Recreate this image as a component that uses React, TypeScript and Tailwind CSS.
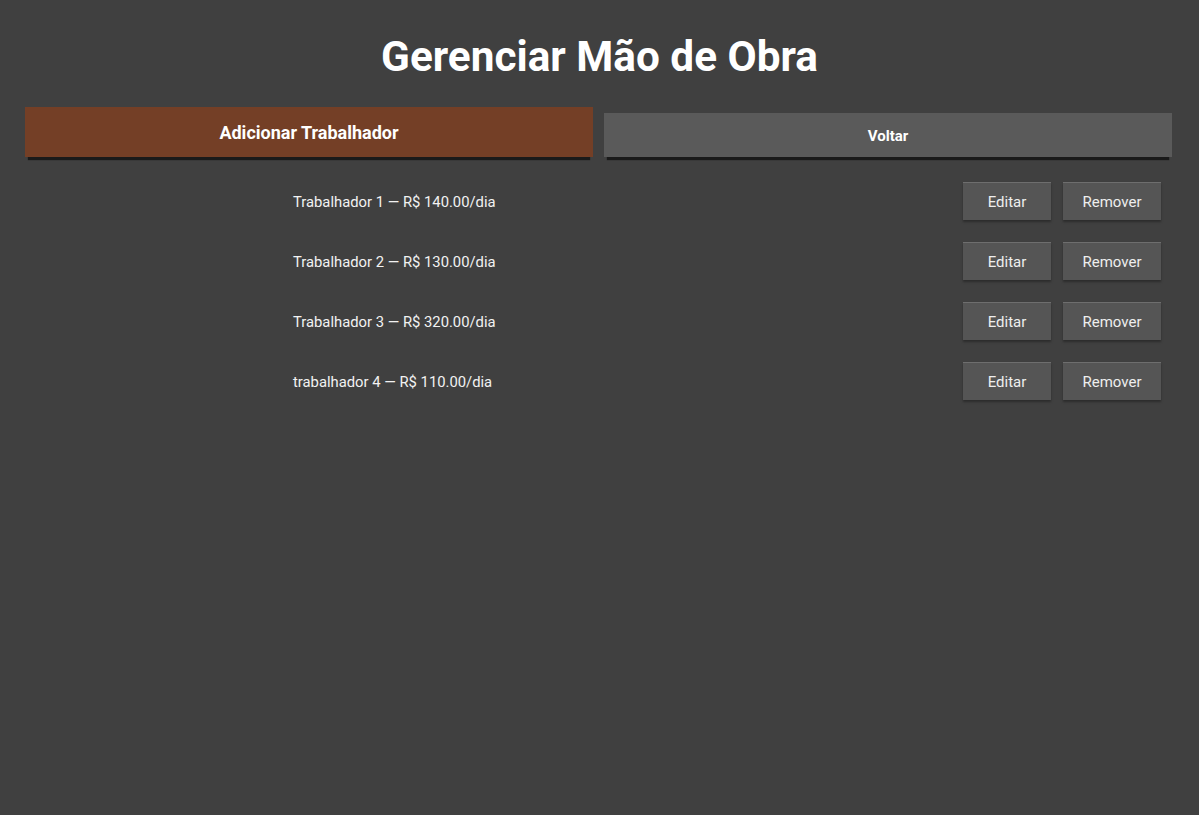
import React from "react";

const workers = [
  { name: "Trabalhador 1", rate: "140.00" },
  { name: "Trabalhador 2", rate: "130.00" },
  { name: "Trabalhador 3", rate: "320.00" },
  { name: "trabalhador 4", rate: "110.00" },
];

export default function App() {
  return (
    <main
      className="min-h-screen w-full bg-[#404040] text-white"
      style={{ fontFamily: "Roboto, 'Liberation Sans', sans-serif" }}
    >
      <h1 className="pt-[32px] text-center text-[42.3px] font-bold leading-[50px]">
        Gerenciar Mão de Obra
      </h1>

      <div className="mt-[25px] flex items-end gap-[11px] pl-[25px] pr-[27px]">
        <button className="h-[50px] flex-1 bg-[#743f26] text-[18px] font-bold shadow-[0_6px_1px_-3px_#1a1a1a]">
          Adicionar Trabalhador
        </button>
        <button className="h-[44px] flex-1 bg-[#5a5a5a] pt-[2px] text-[15px] font-bold shadow-[0_6px_1px_-3px_#1a1a1a]">
          Voltar
        </button>
      </div>

      <ul className="mt-[25px] flex flex-col gap-[22px] pr-[38px]">
        {workers.map((w) => (
          <li key={w.name} className="flex h-[38px] items-center">
            <span className="ml-[293px] flex-1 pt-[2px] text-[14.8px] text-[#f2f2f2]">
              {w.name} — R$ {w.rate}/dia
            </span>
            <div className="flex gap-[12px]">
              <button className="h-[38px] w-[88px] border-t border-[#6e6e6e] bg-[#555555] pt-[2px] text-[15px] text-[#eeeeee] shadow-[0_2px_2px_#2c2c2c]">
                Editar
              </button>
              <button className="h-[38px] w-[98px] border-t border-[#6e6e6e] bg-[#555555] pt-[2px] text-[15px] text-[#eeeeee] shadow-[0_2px_2px_#2c2c2c]">
                Remover
              </button>
            </div>
          </li>
        ))}
      </ul>
    </main>
  );
}
